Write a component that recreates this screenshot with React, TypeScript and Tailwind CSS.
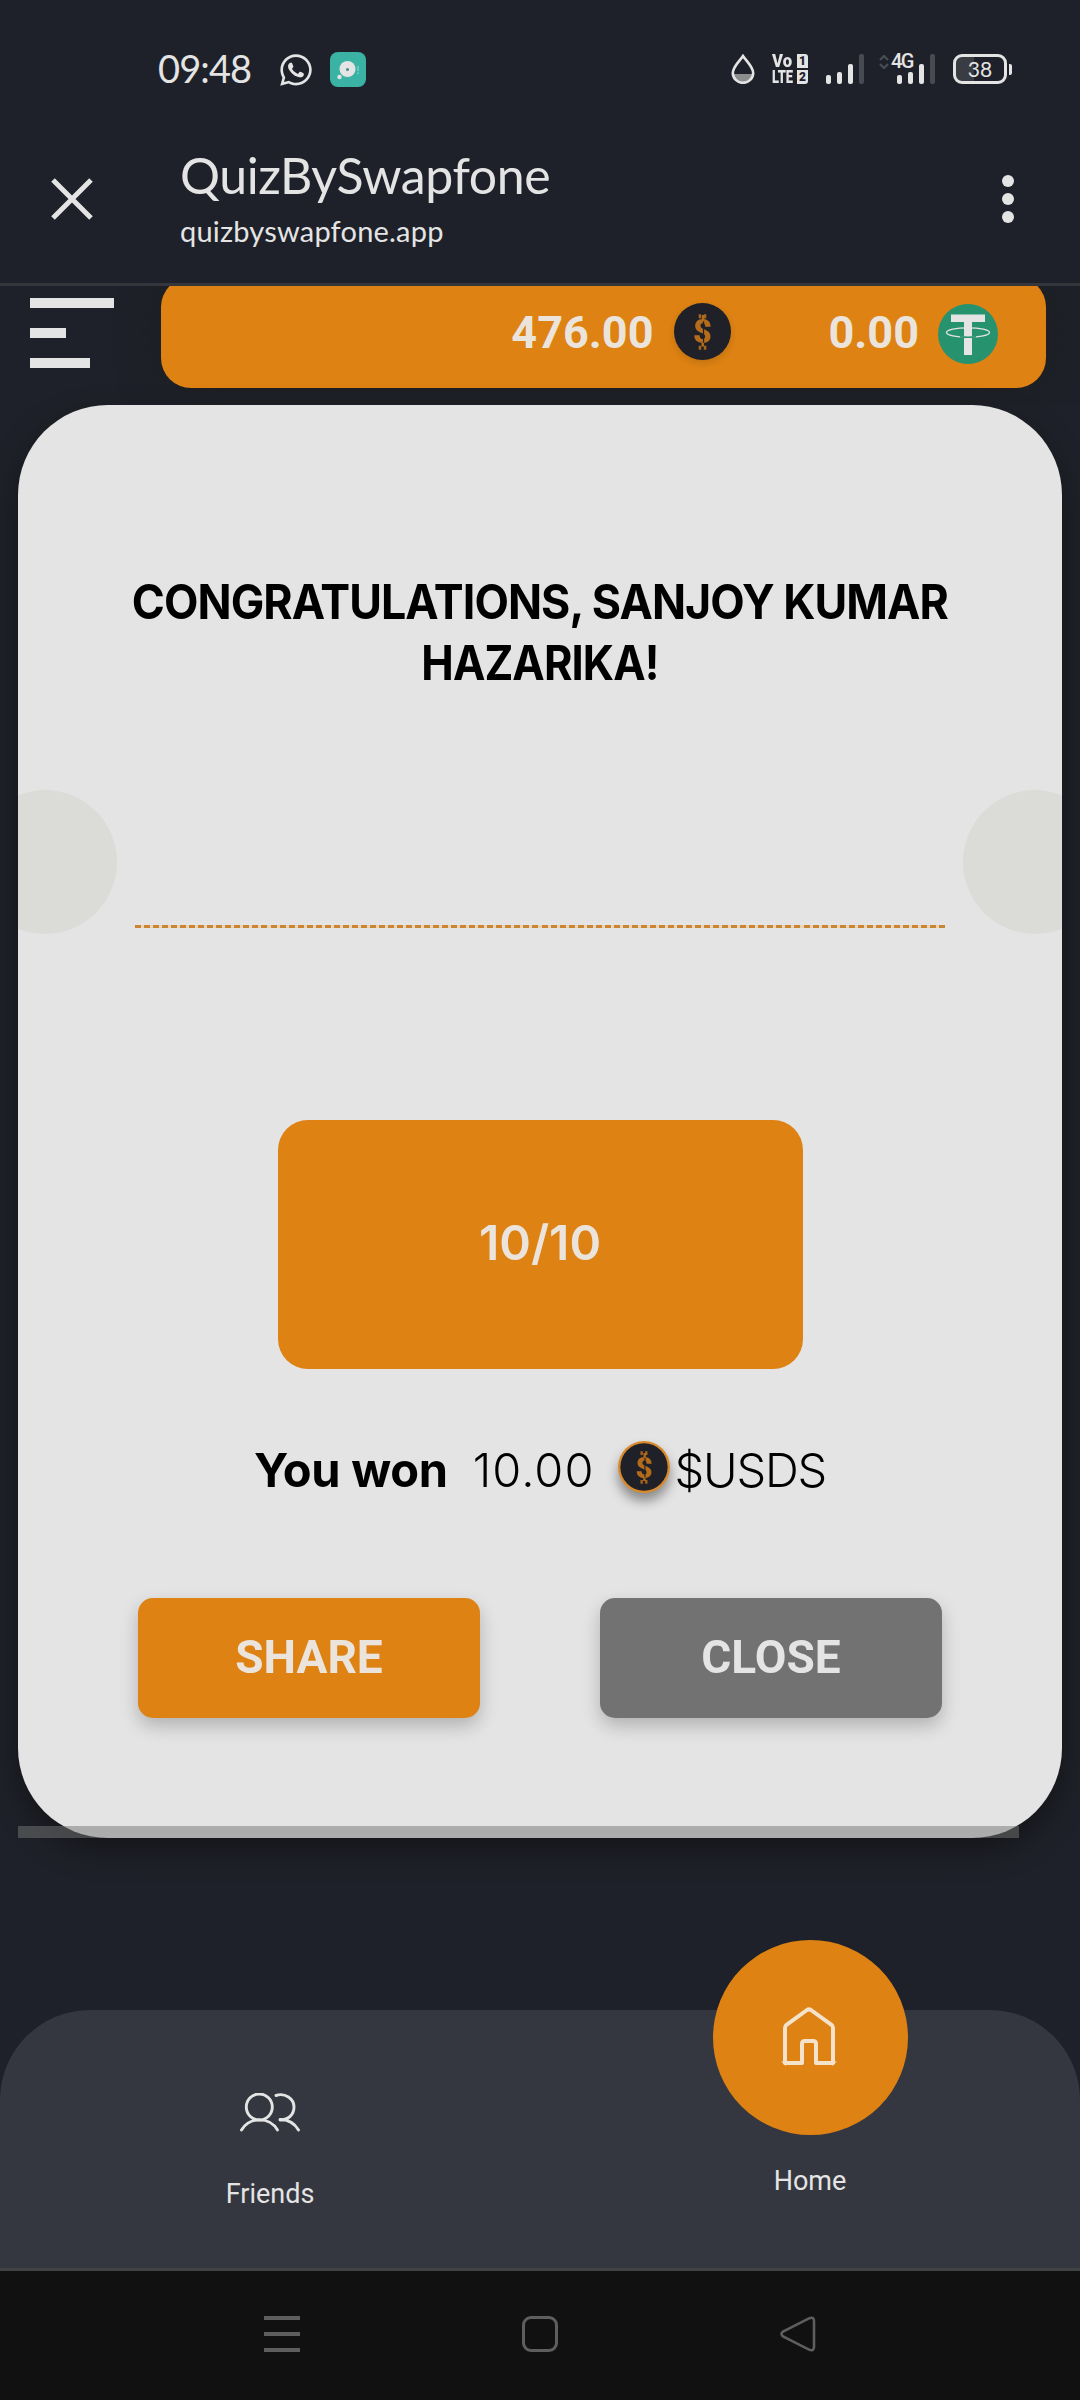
import { FaWhatsapp } from 'react-icons/fa';
import clsx from 'clsx';

const signalBars = ['h-[9px]', 'h-[12px]', 'h-[20px]', 'h-[30px]'];

function Signal() {
  return (
    <div className="flex h-[30px] items-end gap-[6px]">
      {signalBars.map((height, i) => (
        <span key={height} className={clsx('w-[5px] rounded-[2px]', height, i === 3 ? 'bg-[#484b52]' : 'bg-[#e4e4e4]')} />
      ))}
    </div>
  );
}

function Coin({ className, ring }: { className?: string; ring?: boolean }) {
  return (
    <svg viewBox="0 0 56 56" className={className}>
      <circle cx="28" cy="28" r="28" fill={ring ? '#d98a2b' : '#1f2028'} />
      <circle cx="28" cy="28" r={ring ? 25.5 : 27} fill="#1f2028" />
      <path d="M25.5 11v4M30.500 11v4M25.500 42v4M30.500 42v4" stroke="#a8651b" strokeWidth="2.500" />
      <text x="28" y="39.500" textAnchor="middle" fontSize="32" fontWeight="900" fill="#b56c1a" className="font-['Roboto',sans-serif]">$</text>
      <path d="M29 18v21" stroke="#1f2028" strokeWidth="1.200" />
    </svg>
  );
}

function Tether() {
  return (
    <svg viewBox="0 0 60 60" className="size-[60px]">
      <circle cx="30" cy="30" r="30" fill="#26926e" />
      <ellipse cx="30" cy="28.500" rx="21.500" ry="4.700" fill="none" stroke="#e4e4e4" strokeWidth="1.300" />
      <path d="M13 10.500h34v7.500H34v33h-8V18H13z" fill="#e4e4e4" />
      <path d="M22 32.800q8 1 16 0" fill="none" stroke="#26926e" strokeWidth="1.600" />
    </svg>
  );
}

function StatusBar() {
  return (
    <div className="flex h-[138px] items-start pt-[52px] pl-[158px]">
      <span className="mt-[-2px] w-[122px] font-['Lato',sans-serif] text-[38px] leading-[36px] tracking-[-0.9px]">09:48</span>
      <FaWhatsapp className="-ml-[2px] size-[36px]" />
      <svg viewBox="0 0 36 36" className="ml-[16px] size-[36px]">
        <rect width="36" height="35" rx="8" fill="#3bb3a4" />
        <circle cx="17.500" cy="17" r="8" fill="#e4e4e4" />
        <circle cx="17.500" cy="17.500" r="1.500" fill="#3b8f86" />
        <circle cx="9.500" cy="25" r="2.200" fill="#e4e4e4" />
        <path d="M28 14v5M28 20.500v1.500" stroke="#8fd5cb" strokeWidth="1.200" />
      </svg>
      <svg viewBox="0 0 24 30" className="mt-[2px] ml-[365px] h-[30px] w-[24px]">
        <path d="M2 20h20a10 10 0 0 1-20 0z" fill="#8b8c8e" />
        <path d="M12 2C8 8 1.800 13 1.800 19a10.200 9.800 0 0 0 20.400 0C22.200 13 16 8 12 2z" fill="none" stroke="#e4e4e4" strokeWidth="2.600" />
      </svg>
      <div className="mt-[2px] ml-[17px] flex h-[30px] w-[36px] font-['Roboto',sans-serif] font-black">
        <div className="-mt-[1px] flex w-[25px] flex-col text-[19px] leading-[16px]">
          <span className="w-[22px] origin-left scale-x-[0.88]">Vo</span>
          <span className="w-[22px] origin-left scale-x-[0.68]">LTE</span>
        </div>
        <div className="flex flex-col gap-[2px]">
          <span className="h-[14px] w-[11px] rounded-tr-[3px] bg-[#e4e4e4] text-center text-[12px] leading-[15px] text-[#1e2129]">1</span>
          <span className="h-[14px] w-[11px] rounded-br-[3px] bg-[#e4e4e4] text-center text-[12px] leading-[15px] text-[#1e2129]">2</span>
        </div>
      </div>
      <div className="mt-[2px] ml-[18px]">
        <Signal />
      </div>
      <div className="relative mt-[2px] ml-[33px]">
        <Signal />
        <svg viewBox="0 0 10 14" className="absolute top-[1px] -left-[18px] h-[14px] w-[10px]">
          <path d="M1 5l4-4 4 4M1 9l4 4 4-4" fill="none" stroke="#484b52" strokeWidth="2.400" />
        </svg>
        <span className="absolute -top-[1px] -left-[6px] bg-[#1e2129] pb-[1px] font-['Roboto',sans-serif] text-[20px] leading-[17px] font-medium tracking-[-1.500px]">4G</span>
      </div>
      <div className="mt-[2px] ml-[18px] flex items-center gap-[2px]">
        <div className="relative flex h-[30px] w-[54px] items-center justify-center overflow-hidden rounded-[9px] border-[3px] border-[#e4e4e4] bg-[linear-gradient(90deg,#3a3c43_38%,transparent_38%)]">
          <span className="font-['Lato',sans-serif] text-[21px] leading-[24px]">38</span>
        </div>
        <span className="h-[11px] w-[3px] rounded-r-[2px] bg-[#e4e4e4]" />
      </div>
    </div>
  );
}

function BrowserBar() {
  return (
    <div className="flex h-[148px] border-b-[3px] border-[#34363b]">
      <svg viewBox="0 0 42 42" className="mt-[40px] ml-[51px] size-[42px]">
        <path d="M2 2l38 38M40 2L2 40" stroke="#e4e4e4" strokeWidth="5" />
      </svg>
      <div className="ml-[87px] flex flex-1 flex-col font-['Lato',sans-serif]">
        <h1 className="mt-[7px] text-[50px] leading-[60px] tracking-[-0.4px] whitespace-nowrap">QuizBySwapfone</h1>
        <span className="mt-[8px] text-[29px] leading-[36px] tracking-[0.2px]">quizbyswapfone.app</span>
      </div>
      <div className="mt-[37px] mr-[66px] flex flex-col gap-[6px]">
        {[0, 1, 2].map((dot) => (
          <span key={dot} className="size-[12px] rounded-full bg-[#e4e4e4]" />
        ))}
      </div>
    </div>
  );
}

function Balances() {
  return (
    <div className="flex h-[119px] items-start overflow-hidden pl-[30px]">
      <div className="mt-[12px] flex w-[131px] flex-col gap-[20px]">
        <span className="h-[10px] w-[84px] bg-[#e4e4e4]" />
        <span className="h-[10px] w-[36px] bg-[#e4e4e4]" />
        <span className="h-[10px] w-[60px] bg-[#e4e4e4]" />
      </div>
      <div className="-mt-[9px] flex h-[111px] w-[885px] items-start justify-end rounded-[30px] bg-[#dd8213] pt-[26px] pr-[48px] font-['Roboto',sans-serif] text-[45px] leading-[60px] font-bold text-[#ebe4dc] shadow-[0_0_40px_#1e1f20]">
        <span>476.00</span>
        <Coin className="ml-[21px] size-[57px] drop-shadow-md" />
        <span className="ml-[97px]">0.00</span>
        <div className="mt-[1px] ml-[19px]">
          <Tether />
        </div>
      </div>
    </div>
  );
}

function ResultCard() {
  return (
    <div className="relative mx-[18px] flex h-[1433px] flex-col items-center overflow-hidden rounded-[90px] bg-[#e4e4e4] font-['Inter',sans-serif] text-black">
      <span className="absolute top-[385px] -left-[45px] size-[144px] rounded-full bg-[#dbdcd7]" />
      <span className="absolute top-[385px] -right-[45px] size-[144px] rounded-full bg-[#dbdcd7]" />
      <h2 className="mt-[166px] text-center text-[48px] leading-[61px] font-bold tracking-[-1px]">
        <span className="block scale-x-[0.932] whitespace-nowrap">CONGRATULATIONS, SANJOY KUMAR</span>
        <span className="block scale-x-[0.905]">HAZARIKA!</span>
      </h2>
      <div className="mt-[232px] h-[3px] w-[810px] bg-[repeating-linear-gradient(90deg,#c98532_0_6px,#e9d5b5_6px_9.034px)]" />
      <div className="mt-[192px] flex h-[249px] w-[525px] items-center justify-center rounded-[30px] bg-[#dd8213] pb-[3px] text-[48px] font-semibold text-[#ebe4dc]">
        10/10
      </div>
      <div className="mt-[66px] flex h-[70px] items-center text-[47px] whitespace-nowrap">
        <span className="font-bold tracking-[-0.3px]">You won</span>
        <span className="ml-[25px] font-light tracking-[1.100px]">10.00</span>
        <Coin ring className="-mt-[6px] ml-[23px] size-[52px] drop-shadow-[0_8px_6px_rgba(0,0,0,0.4)]" />
        <span className="ml-[5px] font-light tracking-[-1.200px]">$USDS</span>
      </div>
      <div className="mt-[93px] flex gap-[120px] font-['Roboto',sans-serif] text-[46px] font-bold">
        <button className="h-[120px] w-[342px] rounded-[15px] bg-[#dd8213] pb-[2px] text-[#ebe4dc] shadow-[0_8px_18px_rgba(0,0,0,0.22)]">SHARE</button>
        <button className="h-[120px] w-[342px] rounded-[15px] bg-[#727272] pb-[2px] text-[#e4e4e4] shadow-[0_8px_18px_rgba(0,0,0,0.22)]">CLOSE</button>
      </div>
    </div>
  );
}

function BottomNav() {
  return (
    <nav className="flex h-[258px] rounded-t-[90px] bg-[#34373f] font-['Roboto',sans-serif] text-[27px] leading-[34px]">
      <div className="flex flex-1 flex-col items-center">
        <svg viewBox="0 0 60 40" className="mt-[83px] h-[40px] w-[60px]" fill="none" stroke="#e4e4e4" strokeWidth="2.900" strokeLinecap="round">
          <circle cx="19.300" cy="14" r="13" />
          <path d="M1.500 37c8-13.500 28-13.500 36 0M36 2.500c9-3 18 3 18 11.500 0 7-5 13-14 13M40 26.500c8 0 14 3 18.500 10.500" />
        </svg>
        <span className="mt-[44px]">Friends</span>
      </div>
      <div className="flex flex-1 flex-col items-center">
        <div className="-mt-[70px] flex size-[195px] items-center justify-center rounded-full bg-[#dd8213]">
          <svg viewBox="0 0 56 60" className="-mt-[3px] -ml-[2px] h-[60px] w-[56px]" fill="none" stroke="#f5e2cb" strokeWidth="4" strokeLinejoin="round">
            <path d="M4 57V22q0-2 1.500-3.200L26 4q2-1.300 4 0l20.500 14.800Q52 20 52 22v35H35V38q0-3-3-3h-8q-3 0-3 3v19z" />
            <path d="M0 55.500l5 4.500v-4zM56 55.500L51 60v-4z" fill="#f5e2cb" stroke="none" />
          </svg>
        </div>
        <span className="mt-[29px]">Home</span>
      </div>
    </nav>
  );
}

function SystemNav() {
  return (
    <div className="flex h-[132px] items-start justify-between border-t-[3px] border-[#424345] bg-[#111] px-[264px] pt-[45px]">
      <div className="flex w-[36px] flex-col gap-[12.500px]">
        {[0, 1, 2].map((line) => (
          <span key={line} className="h-[3.500px] bg-[#5e5e5e]" />
        ))}
      </div>
      <span className="size-[36px] rounded-[9px] border-[3px] border-[#5e5e5e]" />
      <svg viewBox="0 0 36 36" className="size-[36px]">
        <path d="M29.500 2.200L3 15.500q-3 2.500 0 5l26.500 13.300q4.500 1.500 4.500-3v-25.600q0-4.500-4.500-3z" fill="none" stroke="#5e5e5e" strokeWidth="2.600" />
      </svg>
    </div>
  );
}

export default function App() {
  return (
    <div className="h-[2400px] w-[1080px] overflow-hidden bg-[#1e2129] text-[#e4e4e4]">
      <StatusBar />
      <BrowserBar />
      <Balances />
      <div className="relative h-[1605px]">
        <div className="rounded-b-[90px] [filter:drop-shadow(0_12px_14px_rgba(16,16,16,0.7))]">
          <ResultCard />
        </div>
        <span className="absolute top-[1421px] left-[18px] h-[12px] w-[1001px] bg-[#767676]/51" />
      </div>
      <BottomNav />
      <SystemNav />
    </div>
  );
}
